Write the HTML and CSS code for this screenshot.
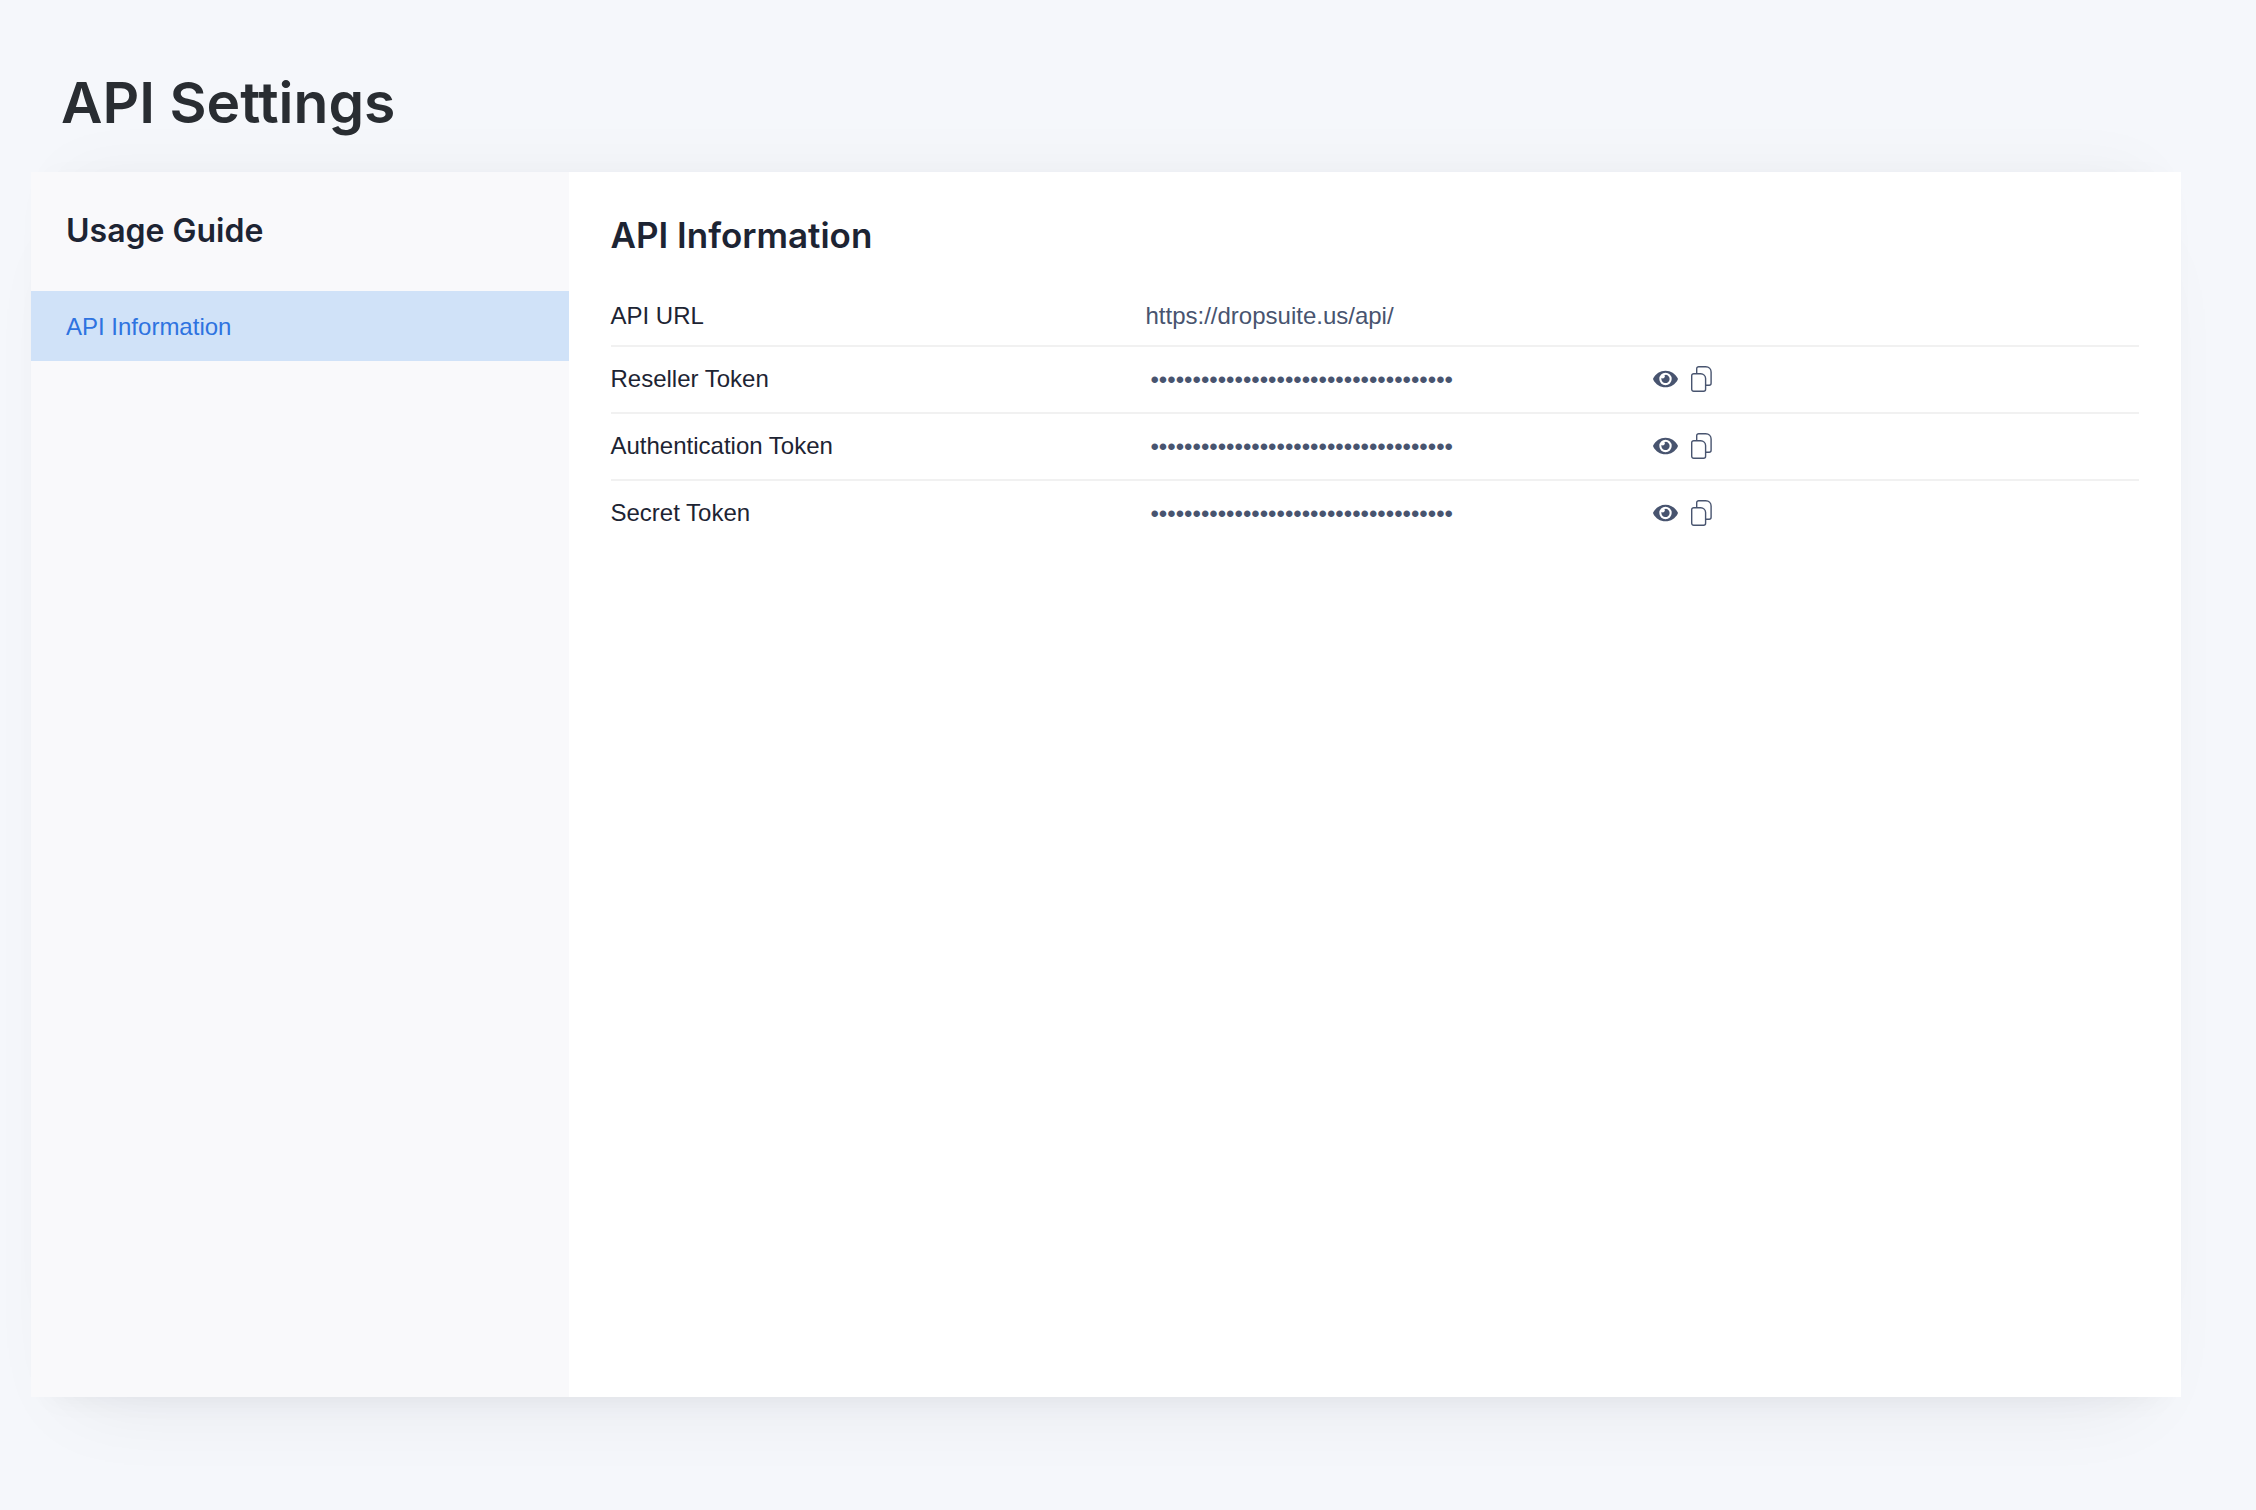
FILE: index.html
```
<!DOCTYPE html>
<html lang="en">
<head>
    <meta charset="utf-8">
    <title>API Settings</title>
    <meta name="viewport" content="width=device-width, initial-scale=1.0">
    <link rel="stylesheet" href="styles.css">
</head>
<body>
    <!-- Shared icons -->
    <svg class="sprite" aria-hidden="true">
        <symbol id="icon-eye" viewBox="0 0 576 512">
            <path fill="currentColor" d="M572.52 241.4C518.29 135.59 410.93 64 288 64S57.68 135.64 3.48 241.41a32.35 32.35 0 0 0 0 29.19C57.71 376.41 165.07 448 288 448s230.32-71.64 284.52-177.41a32.35 32.35 0 0 0 0-29.19zM288 400a144 144 0 1 1 144-144 143.93 143.93 0 0 1-144 144zm0-240a95.31 95.31 0 0 0-25.31 3.79 47.85 47.85 0 0 1-66.9 66.9A95.78 95.78 0 1 0 288 160z"/>
        </symbol>
        <symbol id="icon-copy" viewBox="0 0 21 26">
            <g fill="none" stroke="currentColor" stroke-width="1.4" stroke-linejoin="round">
                <path d="M2.7 7.7h7.1c2.6 0 4.8 2.2 4.8 4.8v10.8a2 2 0 0 1-2 2H2.7a2 2 0 0 1-2-2V9.7a2 2 0 0 1 2-2z"/>
                <path d="M5.7 7.7v-5a2 2 0 0 1 2-2h7.1c3 0 5.3 2.3 5.3 5.3v11.3a2 2 0 0 1-2 2h-3.5"/>
            </g>
        </symbol>
    </svg>

    <h1 class="page-title">API Settings</h1>

    <div class="card">
        <nav class="sidebar">
            <h2 class="sidebar-title">Usage Guide</h2>
            <a class="sidebar-link active" href="#api-information">API Information</a>
        </nav>

        <main class="content" id="api-information">
            <h2 class="content-title">API Information</h2>
            <table class="api-table">
                <tr class="url-row">
                    <th scope="row">API URL</th>
                    <td class="value">https://dropsuite.us/api/</td>
                    <td></td>
                </tr>
                <tr>
                    <th scope="row"><label for="reseller-token">Reseller Token</label></th>
                    <td class="value"><input class="token" type="password" id="reseller-token" value="000000000000000000000000000000000000" readonly></td>
                    <td>
                        <div class="actions">
                            <button class="icon-button" type="button" aria-label="Show reseller token"><svg class="icon-eye"><use href="#icon-eye"/></svg></button>
                            <button class="icon-button" type="button" aria-label="Copy reseller token"><svg class="icon-copy"><use href="#icon-copy"/></svg></button>
                        </div>
                    </td>
                </tr>
                <tr>
                    <th scope="row"><label for="auth-token">Authentication Token</label></th>
                    <td class="value"><input class="token" type="password" id="auth-token" value="000000000000000000000000000000000000" readonly></td>
                    <td>
                        <div class="actions">
                            <button class="icon-button" type="button" aria-label="Show authentication token"><svg class="icon-eye"><use href="#icon-eye"/></svg></button>
                            <button class="icon-button" type="button" aria-label="Copy authentication token"><svg class="icon-copy"><use href="#icon-copy"/></svg></button>
                        </div>
                    </td>
                </tr>
                <tr>
                    <th scope="row"><label for="secret-token">Secret Token</label></th>
                    <td class="value"><input class="token" type="password" id="secret-token" value="000000000000000000000000000000000000" readonly></td>
                    <td>
                        <div class="actions">
                            <button class="icon-button" type="button" aria-label="Show secret token"><svg class="icon-eye"><use href="#icon-eye"/></svg></button>
                            <button class="icon-button" type="button" aria-label="Copy secret token"><svg class="icon-copy"><use href="#icon-copy"/></svg></button>
                        </div>
                    </td>
                </tr>
            </table>
        </main>
    </div>

    <script>
        document.querySelectorAll('.actions').forEach(function (actions) {
            const input = actions.closest('tr').querySelector('.token');
            const buttons = actions.querySelectorAll('button');

            buttons[0].addEventListener('click', function () {
                input.type = input.type === 'password' ? 'text' : 'password';
            });
            buttons[1].addEventListener('click', function () {
                navigator.clipboard.writeText(input.value);
            });
        });
    </script>
</body>
</html>
```
FILE: styles.css
```
* {
    box-sizing: border-box;
}

body {
    display: flex;
    flex-direction: column;
    min-height: 100vh;
    margin: 0;
    padding: 69px 75px 113px 31px;
    background-color: #f5f7fb;
    color: #1d2433;
    font-family: "Liberation Sans", Arial, Helvetica, sans-serif;
    font-size: 24px;
    line-height: 36px;
}

h1,
h2 {
    margin: 0;
    font-family: Inter, sans-serif;
    font-weight: 600;
}

.sprite {
    display: none;
}

.page-title {
    padding: 0 30px;
    margin-bottom: 35px;
    color: #292d32;
    font-size: 57px;
    line-height: 68px;
}

.card {
    display: flex;
    flex: 1;
    background-color: #fff;
    box-shadow:
        0 20px 28px -20px rgba(20, 20, 40, 0.05),
        0 44px 80px -44px rgba(20, 20, 40, 0.08),
        0 -16px 24px -16px rgba(20, 20, 40, 0.02),
        0 -36px 64px -36px rgba(20, 20, 40, 0.04);
}

.sidebar {
    flex: 0 0 25%;
    background-color: #f9f9fb;
}

.sidebar-title {
    padding: 39px 35px 40px;
    font-size: 32px;
    line-height: 40px;
}

.sidebar-link {
    display: block;
    padding: 18px 35px 16px;
    color: #2e73e0;
    text-decoration: none;
}

.sidebar-link.active {
    background-color: #d0e2f8;
}

.content {
    flex: 1;
    padding: 42px;
}

.content-title {
    margin-bottom: 28px;
    font-size: 35px;
    line-height: 42px;
}

.api-table {
    width: 100%;
    table-layout: fixed;
    border-collapse: collapse;
}

.api-table tr {
    height: 67px;
    border-bottom: 2px solid #f1f1f1;
}

.api-table tr:last-child {
    border-bottom: none;
}

.api-table th,
.api-table td {
    padding: 0 0 2px;
    font-weight: 400;
    text-align: left;
}

.api-table th {
    width: 35%;
}

.api-table .value {
    width: 508px;
    padding-bottom: 0;
    color: #48546f;
}

.api-table .url-row {
    height: 62px;
}

.api-table .url-row th,
.api-table .url-row td {
    padding: 2px 0 0;
}

.token {
    display: block;
    width: 100%;
    padding: 0 5px;
    border: none;
    outline: none;
    background: transparent;
    color: inherit;
    font: inherit;
}

.actions {
    display: flex;
    align-items: center;
    gap: 13px;
}

.icon-button {
    display: flex;
    padding: 0;
    border: none;
    background: transparent;
    color: #48546f;
    cursor: pointer;
}

.icon-eye {
    width: 25px;
    height: 22px;
}

.icon-copy {
    width: 21px;
    height: 26px;
}
```
